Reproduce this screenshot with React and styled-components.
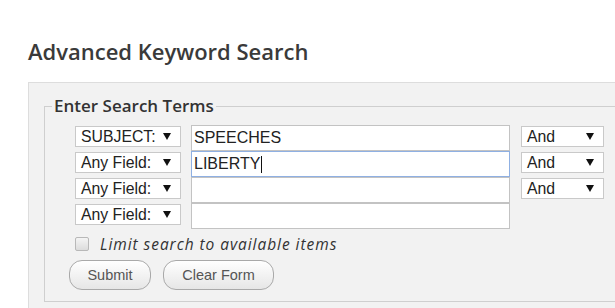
import React from 'react'
import styled, { createGlobalStyle } from 'styled-components'

const GlobalStyle = createGlobalStyle`
  html, body {
    margin: 0;
    padding: 0;
    background: #ffffff;
    overflow: hidden;
  }
`

const Page = styled.div`
  width: 615px;
  height: 308px;
  overflow: hidden;
  padding-left: 28px;
  box-sizing: border-box;
`

const Title = styled.h1`
  margin: 0;
  padding: 36px 0 0 0;
  height: 82px;
  box-sizing: border-box;
  font-family: 'Open Sans', sans-serif;
  font-weight: 600;
  font-size: 22px;
  line-height: 30px;
  color: #3a3a3a;
`

const Panel = styled.div`
  width: 640px;
  height: 240px;
  background: #f2f2f2;
  border: 1px solid #dddddd;
  box-sizing: border-box;
  padding: 12px 0 0 15px;
`

const Fieldset = styled.fieldset`
  margin: 0;
  padding: 8px 0 8px 30px;
  border: 1px solid #cfcfcf;
  min-width: 0;
  height: 207px;
  box-sizing: border-box;
`

const Legend = styled.legend`
  margin-left: -23px;
  padding: 0 2px;
  font-family: 'Open Sans', sans-serif;
  font-weight: 600;
  font-size: 17px;
  line-height: 22px;
  color: #333333;
`

const Grid = styled.div`
  display: grid;
  grid-template-columns: 106px 319px 84px;
  grid-auto-rows: 26px;
  column-gap: 10px;
  align-items: start;
`

const SelectBox = styled.div`
  display: flex;
  align-items: center;
  justify-content: space-between;
  height: 21px;
  margin-top: 1px;
  margin-left: ${p => p.$shift || 0}px;
  padding: 0 9px 0 5px;
  box-sizing: border-box;
  background: #ffffff;
  border: 1px solid #c9c9c9;
  font-family: 'Liberation Sans', Arial, sans-serif;
  font-size: 15.8px;
  color: #222222;
`

const Field = styled.div`
  display: flex;
  align-items: center;
  height: 26px;
  padding-left: 2px;
  box-sizing: border-box;
  background: #ffffff;
  border: 1px solid ${p => (p.$focused ? '#8fb0e3' : '#c3c3c3')};
  font-family: 'Liberation Sans', Arial, sans-serif;
  font-size: 16px;
  color: #222222;
`

const Caret = styled.span`
  display: inline-block;
  width: 1px;
  height: 17px;
  margin-left: 1px;
  background: #111111;
`

const CheckRow = styled.label`
  display: flex;
  align-items: center;
  gap: 11px;
  margin-top: 6px;
  font-family: 'Open Sans', sans-serif;
  font-style: italic;
  font-size: 15.5px;
  letter-spacing: 0.95px;
  line-height: 18px;
  color: #333333;
`

const Check = styled.span`
  width: 12px;
  height: 12px;
  border: 1px solid #b8b8b8;
  border-radius: 2px;
  background: linear-gradient(#f4f4f4, #dcdcdc);
`

const Buttons = styled.div`
  display: flex;
  gap: 12px;
  margin-top: 7px;
  margin-left: -6px;
`

const Button = styled.button`
  height: 30px;
  width: ${p => p.$w}px;
  padding: 0;
  border: 1px solid #a9a9a9;
  border-radius: 13px;
  background: linear-gradient(#ffffff, #e6e6e6);
  font-family: 'Liberation Sans', Arial, sans-serif;
  font-size: 14.5px;
  color: #555555;
`

const Arrow = () => (
  <svg width="8" height="7" viewBox="0 0 8 7">
    <path d="M0 0 H8 L4 7 Z" fill="#111" />
  </svg>
)

const rows = [
  { field: 'SUBJECT:', value: 'SPEECHES', op: 'And' },
  { field: 'Any Field:', value: 'LIBERTY', op: 'And', focused: true },
  { field: 'Any Field:', value: '', op: 'And' },
  { field: 'Any Field:', value: '' }
]

const App = () => (
  <>
    <GlobalStyle />
    <Page>
      <Title>Advanced Keyword Search</Title>
      <Panel>
        <Fieldset>
          <Legend>Enter Search Terms</Legend>
          <Grid>
            {rows.map((r, i) => (
              <React.Fragment key={i}>
                <SelectBox>
                  <span>{r.field}</span>
                  <Arrow />
                </SelectBox>
                <Field $focused={r.focused}>
                  {r.value}
                  {r.focused && <Caret />}
                </Field>
                {r.op ? (
                  <SelectBox $shift={1}>
                    <span>{r.op}</span>
                    <Arrow />
                  </SelectBox>
                ) : (
                  <span />
                )}
              </React.Fragment>
            ))}
          </Grid>
          <CheckRow>
            <Check />
            Limit search to available items
          </CheckRow>
          <Buttons>
            <Button $w={82}>Submit</Button>
            <Button $w={111}>Clear Form</Button>
          </Buttons>
        </Fieldset>
      </Panel>
    </Page>
  </>
)

export default App
